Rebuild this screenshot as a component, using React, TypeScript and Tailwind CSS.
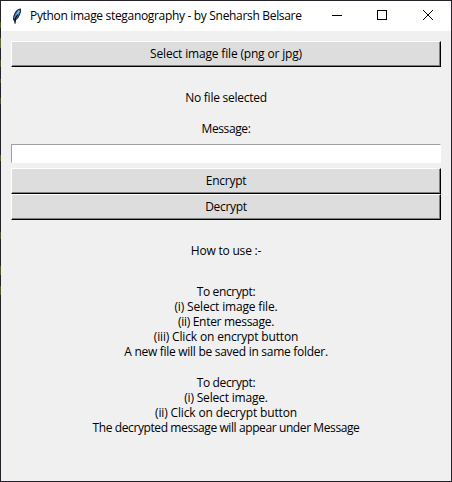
import type { ReactNode } from 'react';

function Feather() {
  return (
    <svg width="10" height="17" viewBox="0 0 10 17">
      <path d="M8.4 1C6.4 1.2 4.4 2.8 3.2 5 2 7.2 1.2 9.3 1.6 11.2L3 12.4C5 11 6.6 9.2 7.2 7.2 8.2 5.4 8.8 3 8.4 1Z" fill="#3f86d2" stroke="#1a2230" strokeWidth="1.1" />
      <path d="M7.2 2.6 4.2 7.8" stroke="#8dbcee" strokeWidth="1.2" />
      <path d="M5.6 6.5 3.2 11 3 15.6" fill="none" stroke="#0a0a0a" strokeWidth="1.2" />
      <path d="M1.5 12h2M2.5 13.5h1" stroke="#0a0a0a" strokeWidth="1" />
    </svg>
  );
}

function Button({ children, tracking }: { children: ReactNode; tracking: string }) {
  return (
    <button className="block h-[26px] w-full border border-t-white border-r-black border-b-black border-l-white bg-[#dddddd] p-0 text-[12px] leading-[24px] shadow-[inset_-1px_-1px_0_#808080]">
      <span className={tracking}>{children}</span>
    </button>
  );
}

function Line({ children, tracking }: { children: ReactNode; tracking: string }) {
  return <p className={`h-[15px] leading-[15px] whitespace-nowrap ${tracking}`}>{children}</p>;
}

export default function App() {
  return (
    <div className="flex h-[482px] w-[452px] bg-[#25222a] font-['Open_Sans','Noto_Sans',sans-serif] text-[12px] text-black">
      <div className="w-px bg-[linear-gradient(#25222a_22px,#4d5a2c_22px,#4d5a2c_28px,#25222a_28px,#25222a_38px,#5c6b35_38px,#5c6b35_48px,#25222a_48px,#25222a_60px,#454f2b_60px,#454f2b_67px,#25222a_67px,#25222a_79px,#454f2b_79px,#454f2b_83px,#25222a_83px,#25222a_98px,#454f2b_98px,#454f2b_104px,#25222a_104px,#25222a_155px,#4d5a2c_155px,#4d5a2c_161px,#25222a_161px,#25222a_232px,#454f2b_232px,#454f2b_239px,#25222a_239px,#25222a_266px,#4d5a2c_266px,#4d5a2c_275px,#25222a_275px,#25222a_286px,#4d5a2c_286px,#4d5a2c_295px,#25222a_295px)]" />
      <div className="my-px mr-px flex grow flex-col bg-[#f0f0f0]">
        <header className="flex h-[30px] shrink-0 items-center bg-white">
          <div className="ml-[11px] flex w-[18px]">
            <Feather />
          </div>
          <h1 className="whitespace-nowrap tracking-[-0.32px]">Python image steganography - by Sneharsh Belsare</h1>
          <div className="ml-auto flex h-full">
            <svg width="120" height="30" viewBox="0 0 120 30" shapeRendering="crispEdges" fill="none" stroke="black">
              <path d="M1 14.5h10" />
              <rect x="46.5" y="9.5" width="9" height="9" />
              <path d="M92 9l10 10M102 9L92 19" shapeRendering="auto" />
            </svg>
          </div>
        </header>
        <main className="px-[10px] pt-[10px] text-center">
          <Button tracking="tracking-[-0.17px]">Select image file (png or jpg)</Button>
          <div className="mt-[23px]">
            <Line tracking="tracking-[-0.26px]">No file selected</Line>
          </div>
          <div className="mt-4">
            <Line tracking="tracking-[-0.38px]">Message:</Line>
          </div>
          <input aria-label="Message" className="mt-[8px] mb-[5px] block h-[19px] w-full border border-t-[#a0a0a0] border-r-white border-b-white border-l-[#a0a0a0] bg-white px-1 outline-none" />
          <Button tracking="tracking-[-0.25px]">Encrypt</Button>
          <Button tracking="tracking-[-0.3px]">Decrypt</Button>
          <div className="mt-[23px]">
            <Line tracking="tracking-[-0.2px]">How to use :-</Line>
          </div>
          <section className="mt-[26px]">
            <Line tracking="tracking-[-0.35px]">To encrypt:</Line>
            <Line tracking="tracking-[-0.16px]">(i) Select image file.</Line>
            <Line tracking="tracking-[-0.3px]">(ii) Enter message.</Line>
            <Line tracking="tracking-[-0.16px]">(iii) Click on encrypt button</Line>
            <Line tracking="tracking-[-0.28px]">A new file will be saved in same folder.</Line>
          </section>
          <section className="mt-4">
            <Line tracking="tracking-[-0.35px]">To decrypt:</Line>
            <Line tracking="tracking-[-0.18px]">(i) Select image.</Line>
            <Line tracking="tracking-[-0.15px]">(ii) Click on decrypt button</Line>
            <Line tracking="tracking-[-0.4px]">The decrypted message will appear under Message</Line>
          </section>
        </main>
      </div>
    </div>
  );
}
